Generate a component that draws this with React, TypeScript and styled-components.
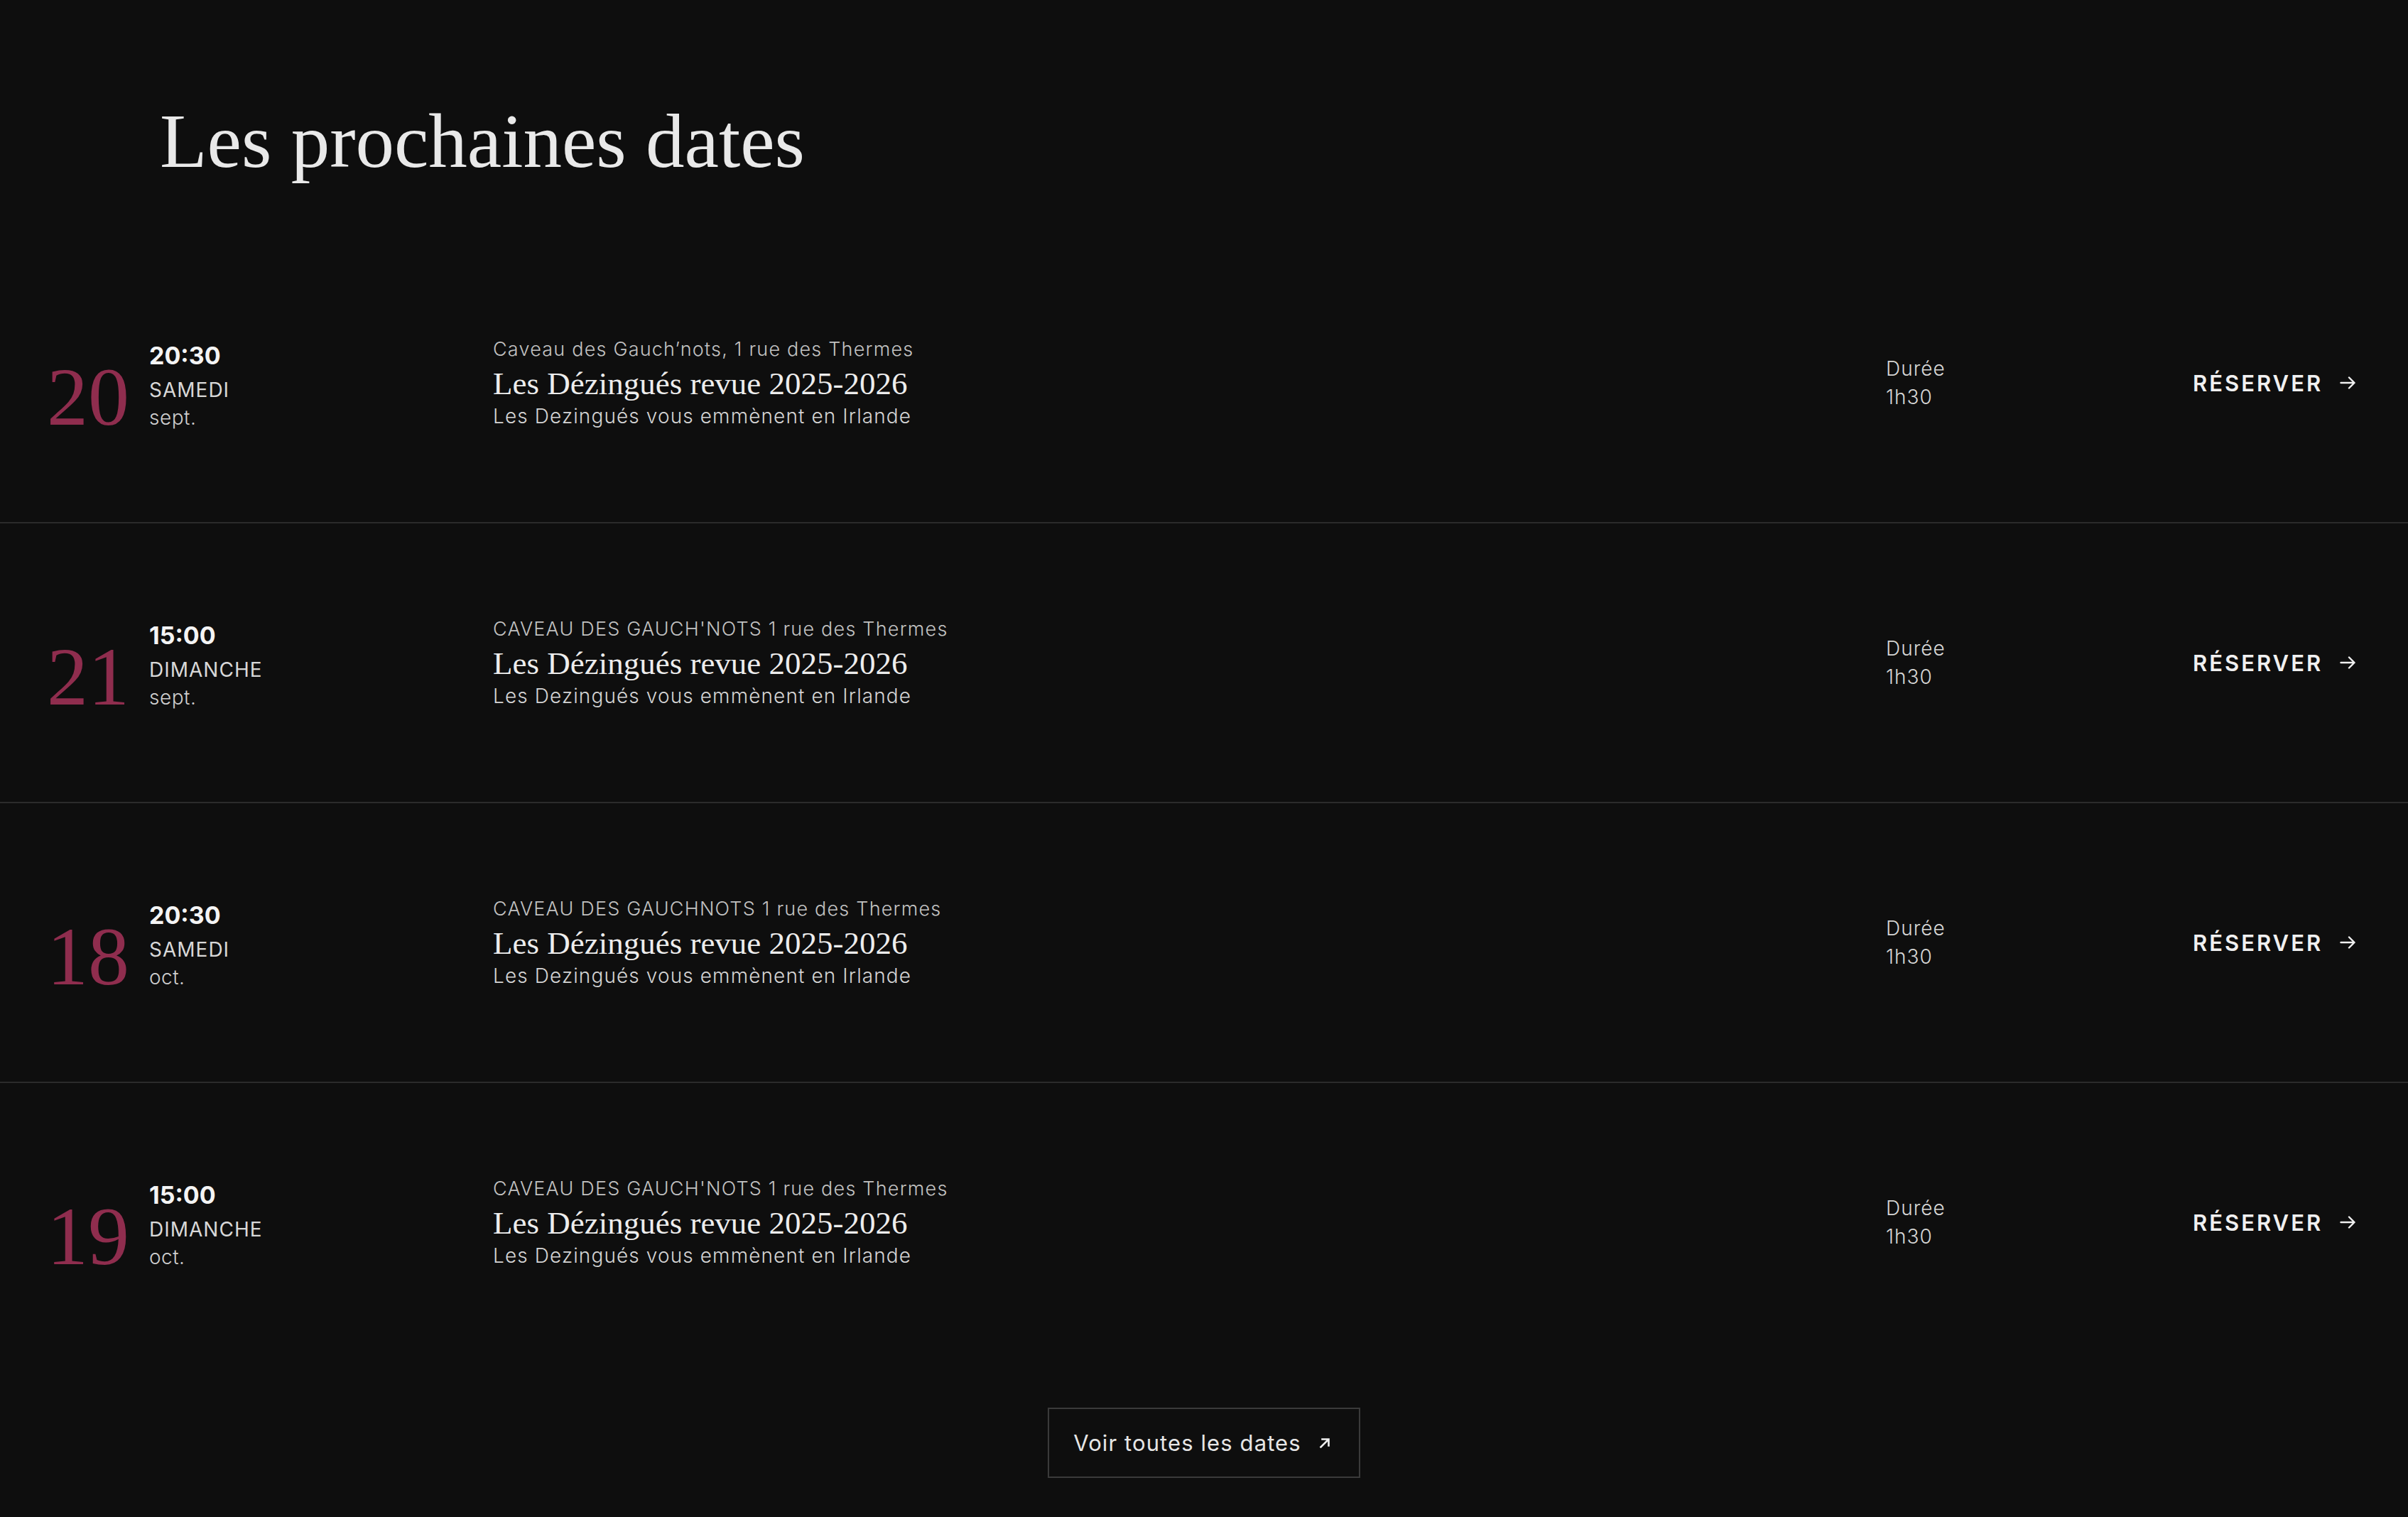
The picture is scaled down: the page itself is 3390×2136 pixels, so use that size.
import React from "react";
import styled, { createGlobalStyle } from "styled-components";

const GlobalStyle = createGlobalStyle`
  html, body {
    margin: 0;
    padding: 0;
    background: #0e0e0e;
  }
  * { box-sizing: border-box; }
`;

const sans = `"Inter", "Liberation Sans", sans-serif`;
const serif = `"Liberation Serif", "DejaVu Serif", serif`;

const Page = styled.main`
  background: #0e0e0e;
  min-height: 2136px;
  font-family: ${sans};
  color: #e8e8e8;
`;

const Header = styled.header`
  padding: 144px 0 89px 225px;
`;

const Title = styled.h1`
  margin: 0;
  font-family: ${serif};
  font-weight: 400;
  font-size: 109px;
  line-height: 110px;
  color: #e9e9e9;
`;

const List = styled.ul`
  list-style: none;
  margin: 0;
  padding: 0;
`;

const Row = styled.li<{ $last?: boolean }>`
  display: grid;
  grid-template-columns: 628px 1fr 432px 226px;
  align-items: center;
  height: 394px;
  padding: 0 77px 0 66px;
  border-bottom: 2px solid ${(p) => (p.$last ? "transparent" : "#2b2b2b")};
`;

const DateCell = styled.div`
  display: flex;
  align-items: last baseline;
  gap: 28px;
  margin-top: 16px;
`;

const DayNumber = styled.span`
  font-family: ${serif};
  font-size: 116px;
  line-height: 1;
  color: #8f2d4e;
  font-variant-numeric: oldstyle-nums;
`;

const TimeBlock = styled.div`
  display: flex;
  flex-direction: column;
`;

const Time = styled.span`
  font-size: 34px;
  line-height: 48px;
  font-weight: 700;
  color: #f4f4f4;
`;

const Weekday = styled.span`
  margin-top: 4px;
  font-size: 28px;
  line-height: 40px;
  font-weight: 400;
  text-transform: uppercase;
  color: #d8d8d8;
  letter-spacing: 1px;
`;

const Month = styled.span`
  font-size: 28px;
  line-height: 38px;
  font-weight: 300;
  letter-spacing: 0.5px;
  color: #cfcfcf;
`;

const InfoCell = styled.div`
  display: flex;
  flex-direction: column;
`;

const Venue = styled.span`
  font-size: 27px;
  line-height: 40px;
  font-weight: 300;
  letter-spacing: 1.2px;
  color: #c2c2c2;
`;

const EventTitle = styled.h2`
  margin: 2px 0 0;
  font-family: ${serif};
  font-weight: 400;
  font-size: 45px;
  line-height: 52px;
  color: #ededed;
`;

const Subtitle = styled.span`
  font-size: 28px;
  line-height: 40px;
  font-weight: 300;
  letter-spacing: 1.1px;
  color: #d4d4d4;
`;

const DurationCell = styled.div`
  display: flex;
  flex-direction: column;
  font-size: 28px;
  line-height: 40px;
  font-weight: 300;
  letter-spacing: 1px;
  color: #d6d6d6;
`;

const BookLink = styled.a`
  display: inline-flex;
  align-items: center;
  gap: 24px;
  font-size: 31px;
  font-weight: 600;
  letter-spacing: 3px;
  text-transform: uppercase;
  color: #f0f0f0;
  text-decoration: none;
  white-space: nowrap;
  cursor: pointer;
`;

const Footer = styled.div`
  display: flex;
  justify-content: center;
  padding: 63px 0 54px;
`;

const MoreButton = styled.a`
  display: inline-flex;
  align-items: center;
  gap: 25px;
  height: 99px;
  padding: 0 40px 0 34px;
  border: 2px solid #3a3a3a;
  font-size: 31px;
  font-weight: 400;
  letter-spacing: 1.1px;
  color: #e6e6e6;
  text-decoration: none;
  cursor: pointer;
`;

const ArrowRight = () => (
  <svg width="22" height="18" viewBox="0 0 22 18" fill="none" stroke="#f0f0f0" strokeWidth="2.4" strokeLinecap="round" strokeLinejoin="round">
    <path d="M1.5 9h19M13 1.5L20.5 9 13 16.5" />
  </svg>
);

const ArrowUpRight = () => (
  <svg width="16" height="16" viewBox="0 0 16 16" fill="none" stroke="#f0f0f0" strokeWidth="2.6" strokeLinecap="square">
    <path d="M2.5 13.5L13 3M4.5 2.5h9v9" />
  </svg>
);

type Show = {
  day: string;
  time: string;
  weekday: string;
  month: string;
  venue: string;
};

const shows: Show[] = [
  { day: "20", time: "20:30", weekday: "Samedi", month: "sept.", venue: "Caveau des Gauch’nots, 1 rue des Thermes" },
  { day: "21", time: "15:00", weekday: "Dimanche", month: "sept.", venue: "CAVEAU DES GAUCH'NOTS 1 rue des Thermes" },
  { day: "18", time: "20:30", weekday: "Samedi", month: "oct.", venue: "CAVEAU DES GAUCHNOTS 1 rue des Thermes" },
  { day: "19", time: "15:00", weekday: "Dimanche", month: "oct.", venue: "CAVEAU DES GAUCH'NOTS 1 rue des Thermes" },
];

export default function App() {
  return (
    <>
      <GlobalStyle />
      <Page>
        <Header>
          <Title>Les prochaines dates</Title>
        </Header>
        <List>
          {shows.map((s, i) => (
            <Row key={i} $last={i === shows.length - 1}>
              <DateCell>
                <DayNumber>{s.day}</DayNumber>
                <TimeBlock>
                  <Time>{s.time}</Time>
                  <Weekday>{s.weekday}</Weekday>
                  <Month>{s.month}</Month>
                </TimeBlock>
              </DateCell>
              <InfoCell>
                <Venue>{s.venue}</Venue>
                <EventTitle>Les Dézingués revue 2025-2026</EventTitle>
                <Subtitle>Les Dezingués vous emmènent en Irlande</Subtitle>
              </InfoCell>
              <DurationCell>
                <span>Durée</span>
                <span>1h30</span>
              </DurationCell>
              <div>
                <BookLink>
                  Réserver
                  <ArrowRight />
                </BookLink>
              </div>
            </Row>
          ))}
        </List>
        <Footer>
          <MoreButton>
            Voir toutes les dates
            <ArrowUpRight />
          </MoreButton>
        </Footer>
      </Page>
    </>
  );
}
